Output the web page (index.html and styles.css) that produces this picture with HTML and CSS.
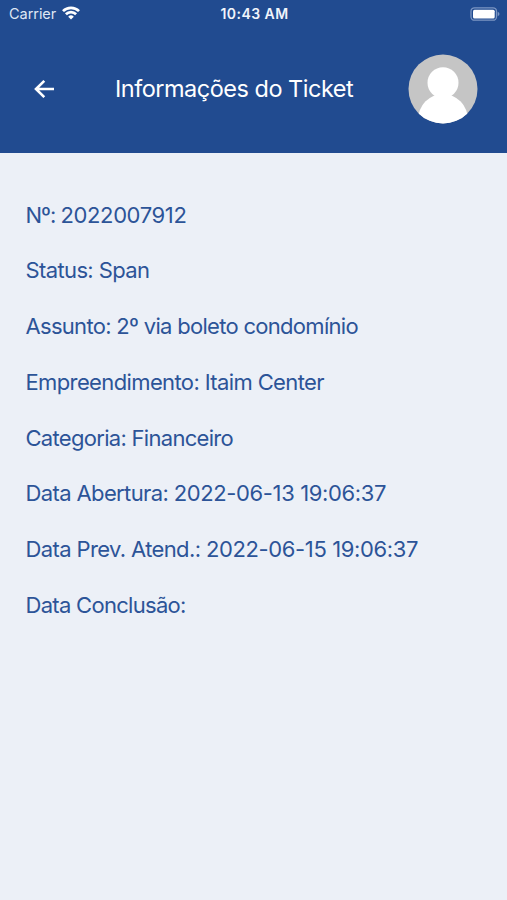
FILE: index.html
```html
<!DOCTYPE html>
<html lang="pt-BR">
<head>
<meta charset="utf-8">
<title>Informações do Ticket</title>
<link rel="stylesheet" href="styles.css">
</head>
<body>
<header class="top">
  <div class="status">
    <div class="carrier"><span class="carrier-name">Carrier</span>
      <svg class="wifi" width="18" height="14" viewBox="0 0 18 14" fill="none" stroke="#fff" stroke-width="2.7"><path d="M1 5.1a11.3 11.3 0 0 1 16 0M3.9 8.3a7.2 7.2 0 0 1 10.2 0"/><path d="M9 13.5 6.2 10.7a4 4 0 0 1 5.6 0z" fill="#fff" stroke="none"/></svg>
    </div>
    <span class="clock">10:43 AM</span>
    <svg class="battery" width="30" height="14" viewBox="0 0 30 14"><rect x="1" y=".8" width="25.5" height="12.4" rx="3.5" fill="none" stroke="#7c96c2" stroke-width="1.3"/><rect x="3" y="2.7" width="21.7" height="8.8" rx="1.5" fill="#fff"/><path d="M27.7 4.7q1.8.8 1.8 2.3t-1.8 2.3z" fill="#7c96c2"/></svg>
  </div>
  <div class="nav">
    <svg class="back" width="20" height="18" viewBox="0 0 20 18" fill="none" stroke="#fff" stroke-width="2.6"><path d="M20 9H2M10.3.9 2 9l8.3 8.1"/></svg>
    <h1 class="title">Informações do Ticket</h1>
    <svg class="avatar" width="70" height="70" viewBox="0 0 70 70"><defs><clipPath id="disc"><circle cx="35" cy="35" r="34.5"/></clipPath></defs><g clip-path="url(#disc)"><path fill="#c5c5c5" d="M0 0h70v70H0z"/><circle cx="35" cy="28.7" r="15.5" fill="#fff"/><ellipse cx="35" cy="66" rx="25" ry="26" fill="#fff"/></g></svg>
  </div>
</header>
<main class="details">
  <p class="row"><span class="label-short">Nº: </span><span class="number">2022007912</span></p>
  <p class="row">Status: Span</p>
  <p class="row tight">Assunto: 2º via boleto condomínio</p>
  <p class="row">Empreendimento: Itaim Center</p>
  <p class="row tight">Categoria: Financeiro</p>
  <p class="row">Data Abertura: <span class="number">2022-06-13 19:06:37</span></p>
  <p class="row">Data Prev. Atend.: <span class="number">2022-06-15 19:06:37</span></p>
  <p class="row tight">Data Conclusão:</p>
</main>
</body>
</html>
```
FILE: styles.css
```css
* { box-sizing: border-box; }
body { margin: 0; min-height: 900px; background: #ecf0f7; font-family: Inter, "Liberation Sans", sans-serif; color: #2c5498; }
.top { height: 152.5px; background: #214b90; color: #fff; }
.status { height: 27px; padding: 0 7px 0 9px; display: grid; grid-template-columns: 1fr auto 1fr; align-items: center; }
.carrier { display: flex; align-items: center; gap: 6px; font-size: 14.5px; color: #dfe7f4; }
.wifi { margin-top: -2px; }
.carrier-name { letter-spacing: -.05px; }
.clock { font-size: 14px; font-weight: 600; letter-spacing: .45px; color: #f0f4fb; }
.battery { justify-self: end; }
.nav { display: flex; align-items: center; height: 124px; padding: 0 29px 0 34px; }
.title { flex: 1; margin: 0 0 0 61px; font-size: 23.5px; line-height: 30px; font-weight: 400; letter-spacing: -.5px; white-space: nowrap; }
.details { padding: 47px 25.5px; display: flex; flex-direction: column; gap: 25.8px; }
.row { margin: 0; font-size: 22px; line-height: 30px; letter-spacing: -.62px; white-space: nowrap; }
.tight { letter-spacing: -.7px; }
.label-short { letter-spacing: -1px; }
.number { letter-spacing: -.38px; }
```
